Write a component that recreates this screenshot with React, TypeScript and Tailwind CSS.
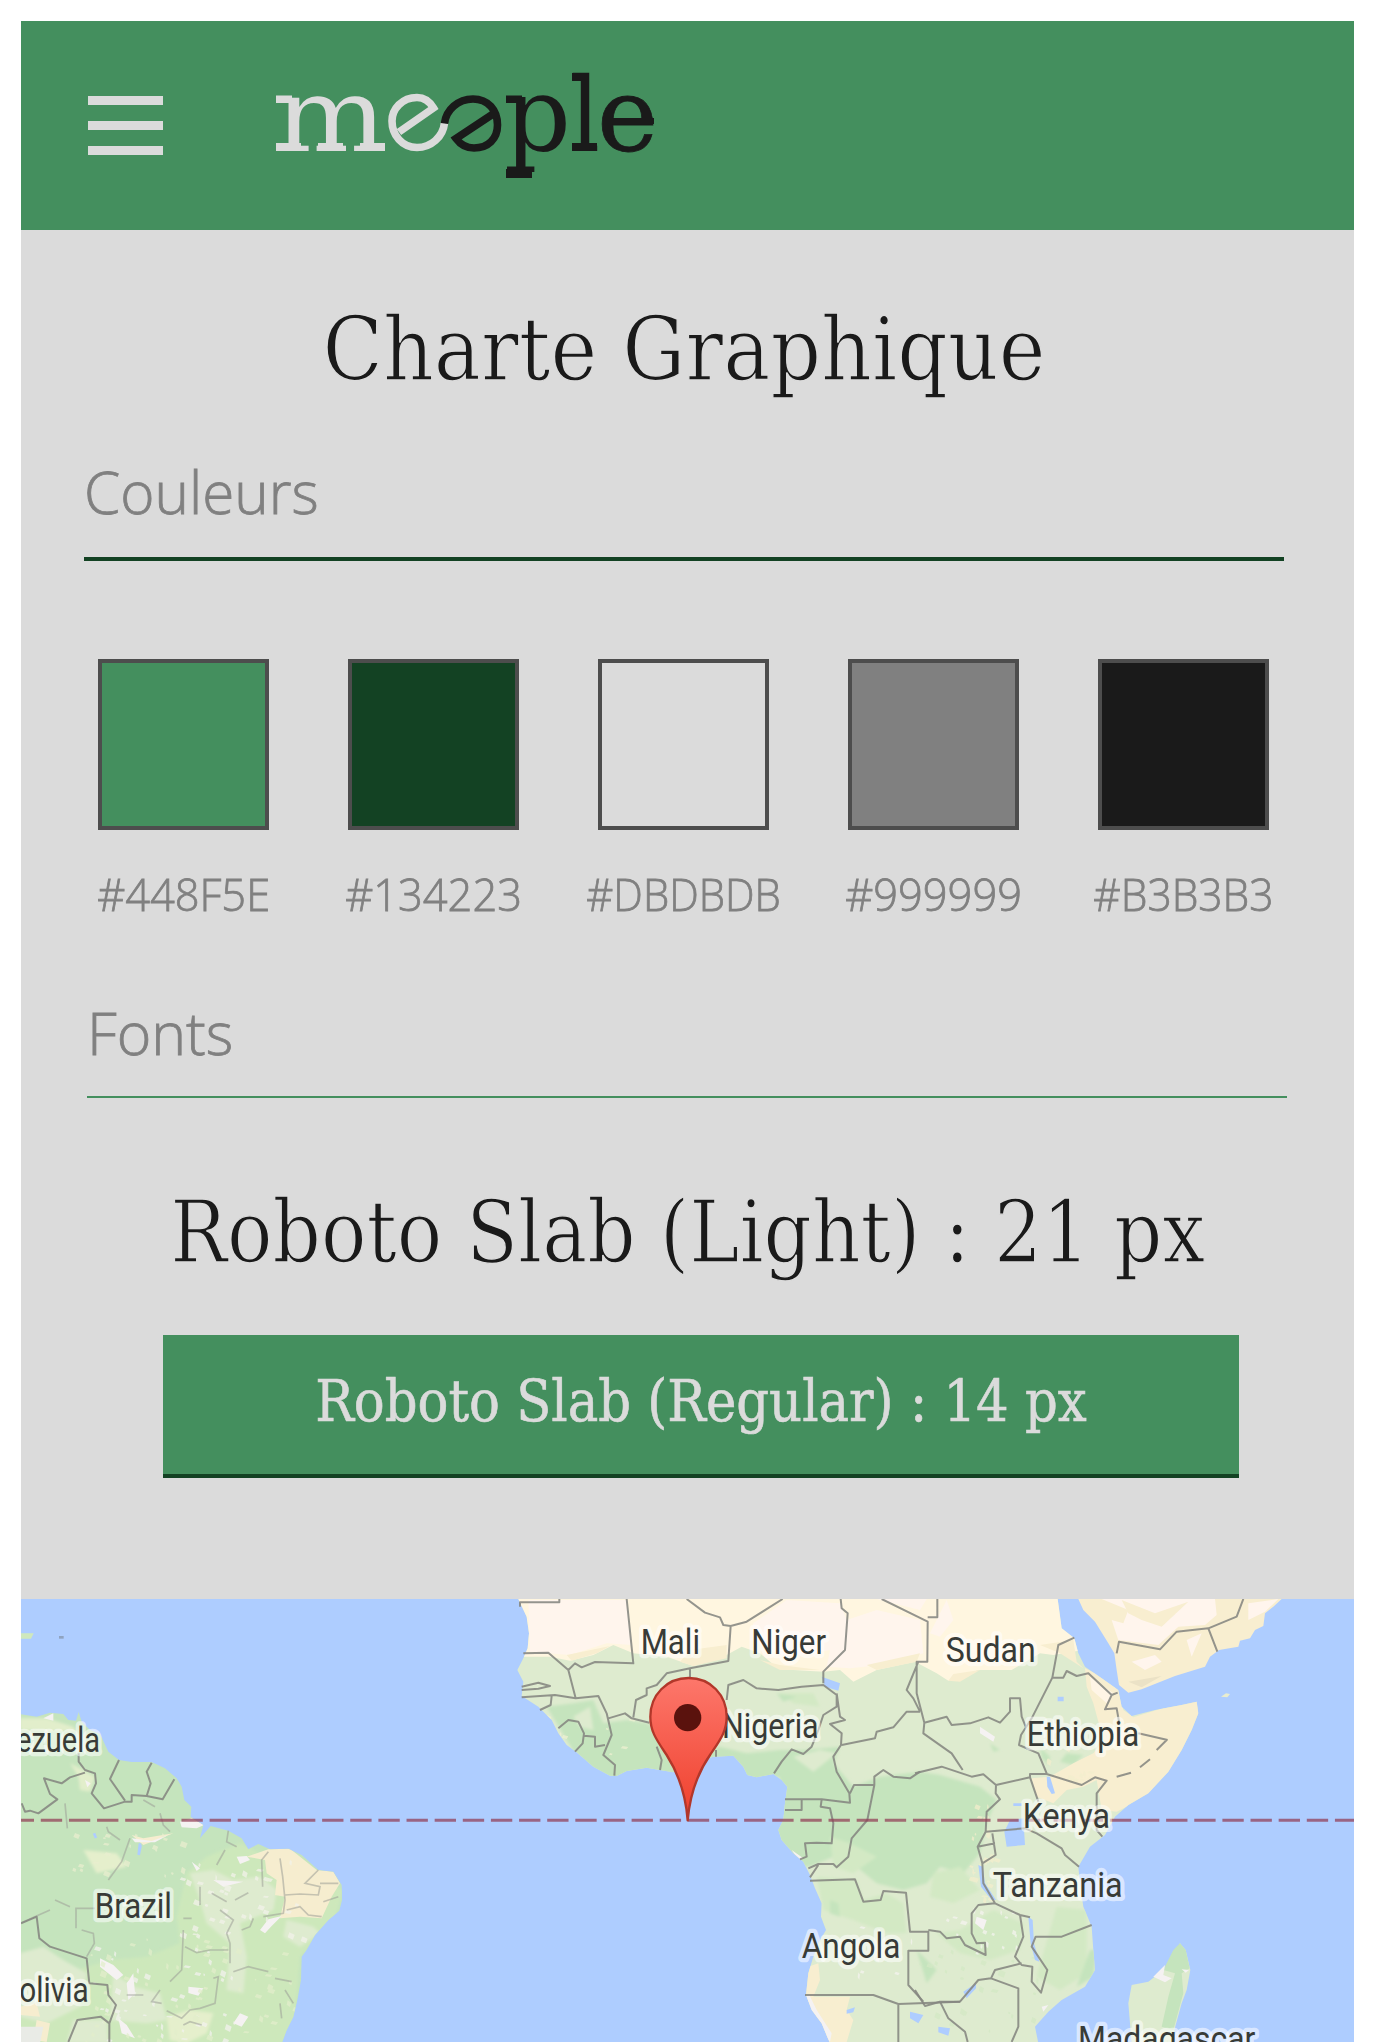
import React from 'react';

const SLAB = "font-['Roboto_Slab','DejaVu_Serif_Condensed','DejaVu_Serif',serif]";
const SANS = "font-['Open_Sans','Noto_Sans',sans-serif] font-light [-webkit-text-stroke:0.8px_#808080]";

const swatches = [
  { label: '#448F5E', fill: 'bg-[#448f5e]', fit: 'scale-x-[0.965]' },
  { label: '#134223', fill: 'bg-[#134223]', fit: 'scale-x-[0.965]' },
  { label: '#DBDBDB', fill: 'bg-[#dbdbdb]', fit: 'scale-x-[0.93]' },
  { label: '#999999', fill: 'bg-[#808080]', fit: 'scale-x-[0.965]' },
  { label: '#B3B3B3', fill: 'bg-[#1a1a1a]', fit: 'scale-x-[0.945]' },
];

function Logo() {
  return (
    <svg className="h-[130px] w-[400px] shrink-0" viewBox="270 60 400 130" role="img" aria-label="meeple">
      <g fontFamily="'DejaVu Serif', serif" fontSize="103">
        <text x="274" y="151" fill="#dbdbdb" textLength="113" lengthAdjust="spacingAndGlyphs">m</text>
        <text x="504" y="151" fill="#1a1a1a" textLength="67" lengthAdjust="spacingAndGlyphs">p</text>
        <text x="570" y="151" fill="#1a1a1a" textLength="30" lengthAdjust="spacingAndGlyphs">l</text>
        <text x="597" y="151" fill="#1a1a1a" stroke="#1a1a1a" strokeWidth="0.8" textLength="61" lengthAdjust="spacingAndGlyphs">e</text>
      </g>
      {/* Slab accents */}
      <path fill="#dbdbdb" d="M276 95.500h16v7.500h-16ZM276 143h25v8h-25ZM318 143h25v8h-25ZM360 143h25v8h-25Z" />
      <path fill="#1a1a1a" d="M506 95.500h16v7.500h-16ZM506 169h26v9h-26ZM572 73h16v8h-16ZM572 143h25v8h-25ZM611 118h43v6h-43Z" />
      <g fill="none" strokeWidth="7.6">
        <path stroke="#dbdbdb" d="M399 132 L433.500 108 C430 102 424 97.500 417 97.500 C402 97.500 392 109 392 121 C392 135 402 147.500 417 147.500 C431 147.500 443 137 444.500 123" />
        <path stroke="#1a1a1a" d="M493 114 L456 138.500 C460 144 466 148 474 148 C488 148 497.500 139 497.500 125 C497.500 110 488 99 473 99 C458 99 446 110 444.500 123.500" />
      </g>
    </svg>
  );
}

const africa =
  'M175 27L200 80L207 130L203 175L190 205L172 240L190 275L185 318L235 350L275 390L295 430L320 465L350 487L400 530L450 557L470 558L500 543L560 533L640 547L690 520L760 500L820 497L850 530L862 555L890 562L940 552L965 570L982 590L975 640L970 690L955 720L965 750L1000 790L1030 815L1050 855L1065 895L1085 940L1083 980L1098 1020L1075 1060L1060 1100L1045 1150L1038 1215L1055 1260L1085 1300L1110 1360L1735 1360L1725 1310L1765 1265L1805 1230L1875 1190L1905 1140L1900 1080L1895 1010L1870 950L1860 880L1855 830L1890 770L1935 735L1965 680L2005 645L2065 610L2125 545L2165 480L2195 420L2215 370L2210 335L2165 345L2085 360L2015 378L1985 350L1975 300L1925 265L1875 230L1855 190L1843 145L1805 115L1793 27Z';

const america =
  'M60 372L110 380L150 368L190 372L205 390L228 392L236 366L245 395L270 420L300 432L325 485L357 510L395 516L455 516L495 535L530 565L545 590L553 630L574 650L572 680L610 705L600 745L632 708L685 722L725 745L745 778L775 762L810 778L865 776L905 795L955 840L1000 845L1025 885L1026 930L1018 962L985 990L945 1035L918 1082L905 1100L903 1170L893 1225L880 1280L860 1320L845 1360L60 1360Z';

/* Small deterministic generator used to scatter terrain flecks. */
function flecks(seed: number, count: number, x: number, y: number, w: number, h: number) {
  let s = seed;
  const next = () => {
    s = (s * 16807) % 2147483647;
    return s / 2147483647;
  };
  let d = '';
  for (let i = 0; i < count; i++) {
    const a = 4 + next() * 14;
    const b = 4 + next() * 12;
    d += `M${(x + next() * w).toFixed(0)} ${(y + next() * h).toFixed(0)}l${a.toFixed(0)} ${(b / 2).toFixed(0)}l${(-a / 3).toFixed(0)} ${b.toFixed(0)}l${(-a).toFixed(0)} ${(-b / 2).toFixed(0)}Z`;
  }
  return d;
}

const labels = [
  { t: 'ezuela', x: 48, y: 487, w: 252 },
  { t: 'Brazil', x: 284, y: 983, w: 232 },
  { t: 'olivia', x: 58, y: 1237, w: 208 },
  { t: 'Mali', x: 1922, y: 191, w: 178 },
  { t: 'Niger', x: 2254, y: 191, w: 224 },
  { t: 'Nigeria', x: 2166, y: 443, w: 290 },
  { t: 'Angola', x: 2405, y: 1104, w: 296 },
  { t: 'Sudan', x: 2837, y: 217, w: 270 },
  { t: 'Ethiopia', x: 3080, y: 469, w: 338 },
  { t: 'Kenya', x: 3068, y: 715, w: 262 },
  { t: 'Tanzania', x: 2978, y: 922, w: 390 },
  { t: 'Madagascar', x: 3234, y: 1384, w: 532 },
];

function WorldMap() {
  return (
    <svg className="block h-[443px] w-full bg-[#aecdff]" viewBox="63 27 3999 1329" preserveAspectRatio="none">
      <defs>
        <clipPath id="africa"><path d={africa} /></clipPath>
        <clipPath id="america"><path d={america} /></clipPath>
        <linearGradient id="pin" x1="0" y1="0" x2="0" y2="1">
          <stop offset="0" stopColor="#fd776b" />
          <stop offset="1" stopColor="#ef3f2c" />
        </linearGradient>
        <filter id="soft"><feGaussianBlur stdDeviation="4" /></filter>
      </defs>

      {/* South America */}
      <path d="M63 130l38 0l-8 16l-30 0Z" fill="#cfe8bd" />
      <path d="M177 138h14v8h-14Z" fill="#8fa3c0" />
      <path d={america} fill="#c5e4bd" />
      <g clipPath="url(#america)">
        <g filter="url(#soft)">
          <path fill="#e2eecb" d="M60 385L140 385L220 410L230 425L60 420Z M210 520L250 540L285 560L270 605L240 600L235 560Z" />
          <path fill="#cde8bb" d="M560 850L620 800L720 760L800 800L1030 900L1000 1000L900 1100L880 1360L60 1360L60 1230L230 1140L330 1110L440 1100L540 1060L530 980Z" />
          <path fill="#deebcf" d="M570 850L640 840L700 870L780 860L830 900L820 960L720 1000L740 1100L730 1210L680 1200L690 1060L620 1000L600 930Z M340 1150L400 1190L480 1210L500 1290L440 1300L330 1290Z M60 1090L130 1070L190 1110L260 1150L240 1250L140 1300L60 1280Z M220 1290L320 1290L325 1360L200 1360Z M860 990L940 1010L960 1030L900 1070L850 1040Z" />
          <path fill="#e5efcc" d="M500 1280L570 1260L640 1270L620 1330L560 1360L510 1350Z M250 780L350 790L380 830L290 850Z" />
        </g>
        <path fill="#f6edcf" d="M740 800L805 778L870 776L950 840L1000 845L1020 880L995 920L965 985L900 980L840 985L855 920L825 915L830 870L800 850L795 810Z" />
        <path fill="#f6edcf" d="M60 1250L110 1240L120 1280L60 1275Z M110 1290L150 1300L140 1356L100 1350Z M395 735L430 745L520 730L430 765Z" />
        <path fill="#e9ebe6" d="M60 1310L130 1310L120 1360L60 1360Z" />
        <path fill="#f5f2f2" d="M540 695L575 685L612 705L590 715L545 712Z M130 385L160 370L160 392Z M255 570L272 580L262 592Z M395 745l60 8l50 -18l-40 22l-60 0Z M710 800l30 -2l10 12l-30 12Z M640 870l90 5l-60 15Z M575 815l25 20l-10 8Z M300 1105l40 20l30 30l-20 15l-50 -40Z M380 1180l20 -30l5 60l-20 20Z M565 1190l45 5l-15 22l-30 -8Z M355 1285l25 20l25 40l-40 -15Z M720 1270l25 10l-20 30l-25 -10Z M780 1020l25 -32l40 -10l-30 30l-20 22Z" />
        <g opacity=".75">
          <path d={flecks(7, 40, 540, 800, 370, 250)} fill="#f2f2ea" />
          <path d={flecks(41, 45, 270, 1060, 440, 290)} fill="#f2f2ee" />
          <path d={flecks(99, 60, 250, 1040, 640, 310)} fill="#e2eecb" />
          <path d={flecks(19, 22, 220, 720, 330, 140)} fill="#e8eecf" />
        </g>
        <path d="M282 730l6 14M420 760l-4 35l6 -30" stroke="#aecdff" strokeWidth="8" fill="none" />
      </g>

      {/* Africa */}
      <g transform="translate(1380 0)">
        <path d={africa} fill="#deebcf" />
        <g clipPath="url(#africa)">
          <g filter="url(#soft)">
            <path fill="#c5e4bd" d="M260 350L340 340L400 330L430 400L500 390L560 400L640 440L700 500L780 470L860 490L960 480L1030 480L1140 470L1120 520L1180 590L1260 560L1380 545L1440 555L1560 590L1610 630L1580 700L1560 790L1510 850L1440 830L1400 880L1330 900L1250 880L1190 830L1120 800L1050 830L1000 830L940 720L960 560L860 580L640 580L450 580L350 500Z" />
            <path fill="#deebcf" d="M340 380L390 350L400 420L360 410Z M620 440L680 430L680 500Z M1000 500L1080 480L1130 490L1060 545Z" />
            <path fill="#d3e9c4" d="M960 310L1060 310L1080 350L1000 340Z M1070 860L1190 870L1210 930L1280 910L1330 940L1340 1030L1280 1030L1180 990L1090 960Z M1420 850L1500 830L1560 900L1480 940L1410 920Z M1110 740L1170 760L1250 800L1180 850L1120 830Z M1600 960L1690 1000L1680 1080L1590 1110L1500 1090L1430 1030L1500 1020Z M1790 950L1880 960L1880 1150L1800 1200L1730 1160Z" />
            <path fill="#c5e4bd" d="M1110 930l25 10l5 40l-30 -10Z M1740 470l30 30l-5 25l-20 -20Z M1820 490l50 5l-30 30l-40 -10Z M1590 460l30 20l-20 5Z M1370 1080l60 60l-30 40Z M950 310l60 10l-40 15Z M1890 1080L1910 1080L1900 1160L1850 1190Z" />
          </g>
          <path fill="#fff6e0" d="M170 20L1800 20L1845 150L1870 180L1780 195L1740 190L1655 240L1555 240L1465 272L1430 250L1365 215L1250 240L1180 275L1140 240L1090 245L1000 240L950 232L900 190L845 170L790 200L700 228L620 200L520 190L460 165L400 195L330 212L270 200L190 200Z" />
          <path fill="#fff5ed" d="M205 30L500 30L515 165L440 160L330 195L210 185Z M880 100L980 30L1140 40L1160 90L1250 60L1380 90L1390 190L1260 225L1170 235L1100 230L1110 180L980 200L870 150Z M1460 30L1480 90L1440 140L1410 130Z M1250 27L1400 27L1380 60Z" />
          <path fill="#f8eed0" d="M690 180L800 165L800 205L700 228L660 215Z M320 195L450 168L410 190L335 212Z M1740 165L1840 150L1850 215L1870 235L1800 190Z M1220 225L1380 190L1370 215L1250 240Z M1480 252L1560 240L1500 275L1465 272Z M900 210L960 225L1080 240L960 240Z" />
          <path fill="#f8eed0" d="M1875 235L1930 262L1975 300L1990 360L2020 382L2220 320L2230 400L2130 560L2050 625L1970 665L1925 660L1910 570L1870 590L1820 600L1780 640L1730 620L1715 565L1770 560L1840 520L1900 490L1930 450L1900 340L1880 290Z" />
          <path fill="#fff5e6" d="M1890 260L1960 310L1940 340L1895 300Z" />
          <path fill="#f8eed0" d="M1045 1130L1075 1120L1080 1170L1060 1220L1170 1220L1160 1260L1180 1290L1160 1356L1100 1356L1060 1260L1030 1210Z" />
          <path fill="#f5f2f2" d="M1038 1215L1048 1215L1070 1260L1115 1330L1110 1356L1060 1290Z M995 780L1030 805L1015 810Z M1560 410L1605 440L1600 455L1560 430Z M1550 980L1580 990L1570 1020L1545 1000Z M1745 1250l20 -5l-15 20Z" />
          <g opacity=".75">
            <path d={flecks(5, 18, 1420, 900, 260, 200)} fill="#f4f3ef" />
            <path d={flecks(29, 8, 1180, 1000, 190, 150)} fill="#f4f3ef" />
            <path d={flecks(77, 28, 1530, 640, 80, 280)} fill="#f3eecd" />
            <path d={flecks(3, 14, 220, 370, 300, 150)} fill="#eef0d2" />
            <path d={flecks(13, 16, 1730, 430, 160, 150)} fill="#f3eecd" />
            <path d={flecks(63, 30, 1370, 1050, 360, 300)} fill="#d3e9c4" />
          </g>
          <path fill="#aecdff" d="M1633 725L1650 690L1690 685L1695 765L1640 770Z M1085 260L1140 280L1135 302L1095 290Z M1760 560L1770 560L1785 610L1775 612L1762 590Z M1793 320h18v14h-18Z M1555 825L1568 830L1575 880L1608 930L1595 930L1563 890Z M1705 980L1718 990L1722 1060L1738 1115L1725 1110L1712 1060Z M1160 1260l25 -8l-5 15l-20 4Z M1350 1265L1390 1275L1375 1300L1350 1285Z M1435 1310l35 5l-5 22l-30 -10Z M1660 640h25v8h-25Z M1510 1205L1548 1180L1548 1195L1520 1225Z" />
        </g>
      </g>

      {/* Arabian peninsula and islands */}
      <g transform="translate(2745 0)">
        <path fill="#f8eed0" d="M490 27L505 60L540 95L580 160L598 190L605 240L612 285L640 308L680 298L780 258L870 230L885 200L912 180L970 170L975 152L1005 145L1020 120L1045 108L1050 70L1075 50L1100 27Z" />
        <path fill="#fff5ed" d="M560 27L900 27L905 75L870 105L790 110L730 165L610 150L590 90L625 100L640 60Z M1000 40L1090 27L1050 65L1000 90Z M650 215L720 195L740 215L690 240Z M815 150L860 130L830 200Z" />
        <path fill="#f8eed0" d="M620 30L720 70L820 35L740 110L680 90L640 70Z" />
        <path fill="#ebe2c6" d="M640 275L740 258L680 292Z" />
        <path fill="#e9edcf" d="M918 320l15 -10l12 2l-8 10Z" />
        <path fill="#deebcf" d="M795 1060L812 1080L826 1140L815 1200L800 1240L778 1320L780 1360L650 1360L640 1240L650 1185L700 1175L745 1140L775 1090Z" />
        <path fill="#c5e4bd" d="M795 1060L812 1080L824 1135L800 1150L805 1210L775 1320L740 1310L760 1220L780 1150L745 1140L775 1080Z" />
        <path fill="#f5f2f2" d="M715 1160l35 -35l-5 30l25 10l-20 12Z M800 1138l22 2l-10 8Z" />
      </g>

      {/* State and region lines */}
      <path
        fill="none" stroke="#9d9f98" strokeOpacity=".55" strokeWidth="5"
        d="M195 640L202 715M320 710L325 725L360 750M390 745L365 815L325 870M430 630L465 650M480 670L490 705L510 725M165 930L210 950M60 1000L150 960M228 1015V955H285M245 1020L280 1030L283 1060L260 1100M675 780L650 825M685 722L680 755L710 770M805 785L785 810L788 890M840 805L848 860L855 930L850 970L790 980M855 915L900 912L955 915L960 890L915 880L955 840M960 880L1015 880M970 935L1015 920M635 910L680 935M705 930L745 908M600 890V945M660 960L700 990L680 1030L690 1060V1120M550 985L575 985M550 1020L545 1140L510 1175M555 1070L590 1088L630 1080L685 1080M700 1145L745 1130L805 1145M825 1165L875 1175M855 1200L880 1240M840 1240L845 1285M640 1165L655 1160L645 1240L600 1255L570 1260L545 1285L500 1262M550 1305L570 1295L605 1305M480 1200L455 1235L485 1240M380 1215H430M760 985L750 1010L725 1020M860 960L900 950L925 975L965 980"
      />

      {/* Country borders */}
      <g fill="none" stroke="#858681" strokeOpacity=".88" strokeWidth="6" strokeLinejoin="round">
        <path d="M236 490V515L255 540L285 550L288 580L275 610L312 655L375 635H395V615L440 618L488 628L523 568M357 510L330 567L375 632M455 518L440 545L452 580L440 618M255 548L210 562L185 580L132 565L150 612L172 628L115 670L90 662L75 665L65 640M63 1000L110 980L118 1045L150 1070L260 1105L268 1180L322 1185L325 1215L348 1245L328 1300L302 1280L232 1290L205 1356M328 1300V1356" />
        <g transform="translate(1380 0)">
          <path d="M180 50V37H298V27M500 27L520 220L405 216L365 232L345 220L325 240L265 188L190 190M325 240L347 325L415 318L440 370L455 435L430 495L465 525L463 557M185 290L235 278L270 288L235 296L185 300M185 322L285 315L347 325M275 318L272 345L240 360M295 415L325 390L355 395L372 430L368 460L345 485M372 437L405 440V470L435 465M445 385L495 370L515 385L568 398M520 382L528 330L560 315V295L590 285L620 250L690 235L805 213L812 108L790 105L780 82L735 68L680 27M690 235V262M812 108L860 95L968 27M1142 27L1145 55L1163 70L1155 180L1090 245L1090 280M800 330L805 285L850 270L890 295L955 300L1025 290L1090 285L1130 315L1130 350L1090 375L1075 420L1055 470L1030 492L995 478L965 515L942 550M590 470L605 510L600 540M768 480V500M1130 310L1140 380L1155 390L1110 402L1145 430L1143 465L1120 500L1130 545L1168 610L1170 638L1085 628H975M1085 628L1082 650L1110 655L1120 700L1115 760L1070 758L1035 760L1040 800L1020 808M1025 628V660H975M1170 610L1182 585H1243V560L1270 540L1300 560L1350 565L1380 545M1243 585L1222 690L1175 745L1165 800L1130 832L1120 822H1075L1045 835M1050 862L1075 825M1050 872L1185 868L1210 935L1262 930L1270 903L1338 908L1350 1025H1405V1082H1345V1185L1390 1235M1035 1215H1240L1315 1242L1500 1235M1315 1242V1356M1145 465L1245 445L1250 425L1300 412L1340 365H1380M1375 215L1340 300L1360 325L1380 365M1265 27L1403 95L1402 215H1370V310L1393 398L1460 380L1475 405L1530 400L1585 382L1620 398L1650 365V325H1680L1685 380L1697 410M1393 398L1390 430L1475 490L1508 540M1403 82H1432V27" />
        </g>
        <g transform="translate(2745 0)">
          <path d="M0 550L80 530L170 560L205 553L243 585L345 562V552H395L500 585L540 562L575 572L545 610V720L562 740M345 562L370 635M478 143L430 165L412 263H445L455 243L485 258L520 250L590 315L608 308M590 315L570 358L605 355L612 395M412 263L350 385L318 435L312 465L370 490L395 550M670 430L758 450M755 450L725 480M705 508L675 532M648 548L605 560M243 585L242 610L255 628L215 665L212 725L188 770L202 820L205 880L240 940L315 975L345 982M212 725L330 715L365 730L440 775L450 795L492 830M232 730L242 795L202 820M188 770L240 760M240 940L190 945L170 970V1030L185 1060L210 1058L212 1095L150 1065L135 1040L95 1045L75 1025L40 1020M315 975L325 1040L300 1100L320 1125L352 1130L350 1175L378 1208L397 1140L350 1070L362 1040H440L530 1005M320 1120L240 1140L228 1165L310 1195V1310L290 1356M228 1165L190 1170L135 1235H75L100 1285L150 1325L158 1356M75 1235L30 1248L0 1200M605 190L612 155L735 178L785 125L880 115L965 80L985 27M880 115L907 185" />
        </g>
      </g>

      {/* Equator */}
      <path d="M38 691H4062" stroke="#913c55" strokeOpacity=".72" strokeWidth="9" strokeDasharray="64 20.400" fill="none" />

      <g fontFamily="Roboto, sans-serif" fontSize="103" fontWeight="400" fill="#383b37" stroke="#fff" strokeOpacity=".55" strokeWidth="26" strokeLinejoin="round" paintOrder="stroke">
        {labels.map((l) => (
          <text key={l.t} x={l.x} y={l.y} textLength={l.w} lengthAdjust="spacingAndGlyphs">{l.t}</text>
        ))}
      </g>

      {/* Marker */}
      <g transform="translate(1380 0)">
        <path d="M683 691C677 610 655 550 620 495C590 450 571 425 571 380C571 315 620 264 686 264C752 264 800 315 800 380C800 425 780 450 750 495C712 550 690 610 683 691Z" fill="url(#pin)" stroke="#b2372a" strokeWidth="7" strokeLinejoin="round" />
        <circle cx="683" cy="383" r="41" fill="#5a120d" />
      </g>
    </svg>
  );
}

export default function App() {
  return (
    <div className="h-[2042px] w-[1375px] overflow-hidden bg-white px-[21px] pt-[21px]">
      <div className="flex h-full flex-col bg-[#dbdbdb]">
        <header className="flex h-[209px] shrink-0 items-start bg-[#448f5e] pl-[67px]">
          <button aria-label="Menu" className="mt-[75px] flex w-[75px] flex-col gap-4">
            <span className="h-[9px] w-full bg-[#dbdbdb]" />
            <span className="h-[9px] w-full bg-[#dbdbdb]" />
            <span className="h-[9px] w-full bg-[#dbdbdb]" />
          </button>
          <div className="ml-[107px] mt-[39px]"><Logo /></div>
        </header>

        <main className="flex h-[1369px] shrink-0 flex-col">
          <h1 className={`mt-[60px] h-[128px] whitespace-nowrap pr-2 text-center text-[87px] leading-[120px] text-[#1a1a1a] ${SLAB} [-webkit-text-stroke:1.4px_#dbdbdb]`}>
            <span className="inline-block scale-x-[1.01]">Charte Graphique</span>
          </h1>

          <section className="ml-[63px] w-[1200px]">
            <h2 className={`mt-[36px] box-content h-[103px] border-b-4 border-[#134223] text-[59px] leading-[75px] text-[#808080] ${SANS}`}>
              <span className="inline-block origin-left scale-x-[0.99]">Couleurs</span>
            </h2>
            <div className="mt-[98px] flex gap-[79px] pl-3.5">
              {swatches.map((s) => (
                <div key={s.label} className="flex w-[171px] flex-col items-center">
                  <div className={`size-[171px] border-4 border-[#4d4d4d] ${s.fill}`} />
                  <span className={`mb-0.5 mt-[34px] text-[45px] leading-[60px] text-[#808080] ${SANS} ${s.fit}`}>{s.label}</span>
                </div>
              ))}
            </div>
          </section>

          <section className="ml-[66px] w-[1200px]">
            <h2 className={`mt-[70px] h-[102px] border-b-2 border-[#448f5e] text-[59px] leading-[72px] text-[#808080] ${SANS}`}>
              <span className="inline-block origin-left">Fonts</span>
            </h2>
          </section>
          <p className={`mt-[73px] flex h-[120px] justify-center whitespace-nowrap text-[86px] leading-[123px] text-[#1a1a1a] ${SLAB} [-webkit-text-stroke:1.4px_#dbdbdb]`}>
            <span className="inline-block scale-x-[0.977]">Roboto Slab (Light) : 21 px</span>
          </p>
          <button className={`ml-[142px] mt-[44px] h-[143px] w-[1076px] shrink-0 whitespace-nowrap border-b-4 border-[#134223] bg-[#448f5e] pb-[5px] text-[57px] text-[#dbdbdb] ${SLAB} [-webkit-text-stroke:0.6px_#dbdbdb]`}>
            <span className="inline-block">Roboto Slab (Regular) : 14 px</span>
          </button>
        </main>
        <WorldMap />
      </div>
    </div>
  );
}
